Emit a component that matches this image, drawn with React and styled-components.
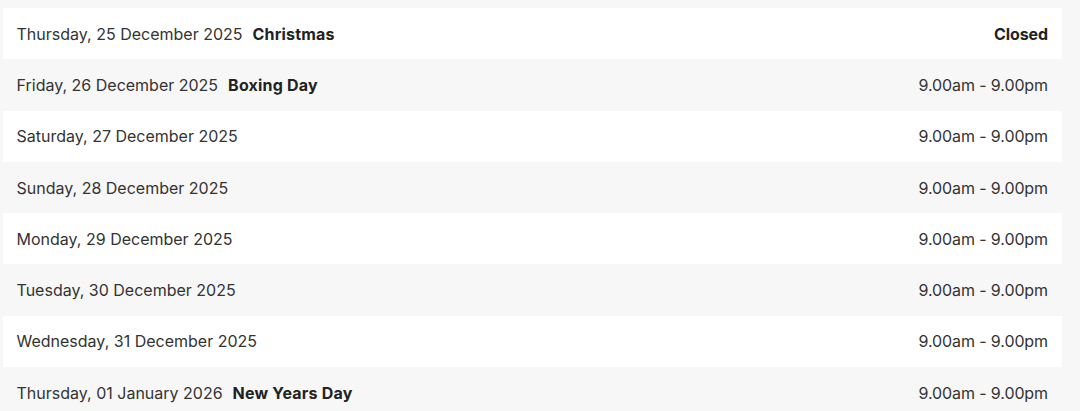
import React from "react";
import styled, { createGlobalStyle } from "styled-components";

const Global = createGlobalStyle`
  html, body { margin: 0; padding: 0; background: #f7f7f7; }
  body { font-family: Inter, "Liberation Sans", Arial, sans-serif; }
`;

const Page = styled.div`
  padding: 8px 18px 0 3px;
`;

const Table = styled.div`
  display: flex;
  flex-direction: column;
`;

const Row = styled.div`
  display: flex;
  align-items: center;
  justify-content: space-between;
  height: 51.3px;
  padding: 0 14px 0 13.5px;
  background: ${(p) => (p.$alt ? "transparent" : "#ffffff")};
  font-size: 16px;
  color: #333333;
`;

const DateText = styled.span`
  font-weight: 400;
`;

const Holiday = styled.strong`
  font-weight: 700;
  color: #222222;
  margin-left: 10px;
  letter-spacing: 0.2px;
`;

const Hours = styled.span`
  font-weight: ${(p) => (p.$closed ? 700 : 400)};
  color: ${(p) => (p.$closed ? "#222222" : "#333333")};
  letter-spacing: -0.1px;
`;

const rows = [
  { date: "Thursday, 25 December 2025", holiday: "Christmas", hours: "Closed", closed: true },
  { date: "Friday, 26 December 2025", holiday: "Boxing Day", hours: "9.00am - 9.00pm" },
  { date: "Saturday, 27 December 2025", hours: "9.00am - 9.00pm" },
  { date: "Sunday, 28 December 2025", hours: "9.00am - 9.00pm" },
  { date: "Monday, 29 December 2025", hours: "9.00am - 9.00pm" },
  { date: "Tuesday, 30 December 2025", hours: "9.00am - 9.00pm" },
  { date: "Wednesday, 31 December 2025", hours: "9.00am - 9.00pm" },
  { date: "Thursday, 01 January 2026", holiday: "New Years Day", hours: "9.00am - 9.00pm" },
];

export default function App() {
  return (
    <>
      <Global />
      <Page>
        <Table>
          {rows.map((r, i) => (
            <Row key={r.date} $alt={i % 2 === 1}>
              <span>
                <DateText>{r.date}</DateText>
                {r.holiday && <Holiday>{r.holiday}</Holiday>}
              </span>
              <Hours $closed={r.closed}>{r.hours}</Hours>
            </Row>
          ))}
        </Table>
      </Page>
    </>
  );
}
